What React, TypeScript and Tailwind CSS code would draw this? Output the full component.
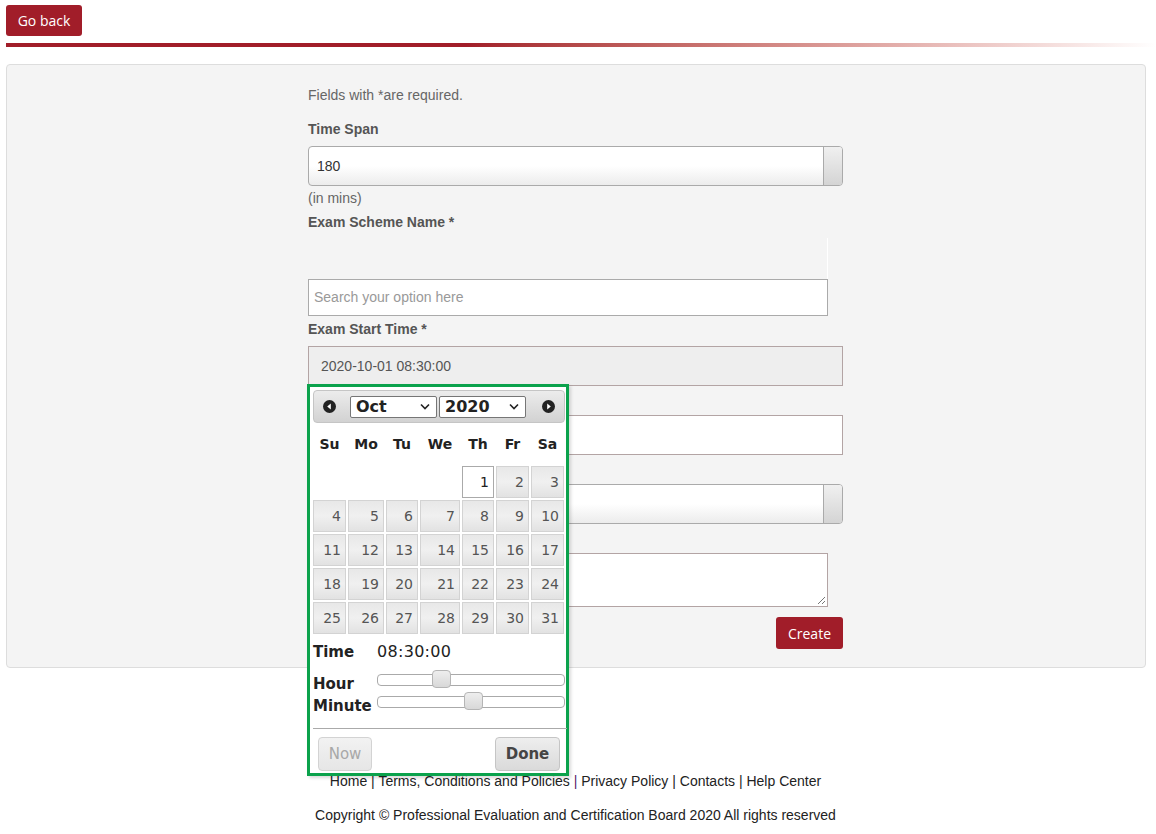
import React from 'react';

const SANS = "font-['Liberation_Sans',Arial,sans-serif]";
const UI = "font-['DejaVu_Sans',Verdana,sans-serif]";

// column tracks of the calendar table (cell + spacing)
const DAY_COLS = 'grid grid-cols-[35px_38px_34px_42px_34px_35px_33px]';
const WEEKDAYS = ['Su', 'Mo', 'Tu', 'We', 'Th', 'Fr', 'Sa'];

const weeks: (number | null)[][] = [
  [null, null, null, null, 1, 2, 3],
  [4, 5, 6, 7, 8, 9, 10],
  [11, 12, 13, 14, 15, 16, 17],
  [18, 19, 20, 21, 22, 23, 24],
  [25, 26, 27, 28, 29, 30, 31],
];

const NavIcon: React.FC<{ dir: 'prev' | 'next' }> = ({ dir }) => (
  <svg width="13" height="13" viewBox="0 0 13 13">
    <circle cx="6.5" cy="6.5" r="6.5" fill="#222" />
    {dir === 'prev' ? <polygon points="7.8,3.5 7.8,9.5 4.2,6.5" fill="#fff" /> : <polygon points="5.2,3.5 5.2,9.5 8.8,6.5" fill="#fff" />}
  </svg>
);

const FakeSelect: React.FC<{ value: string }> = ({ value }) => (
  <div className="flex h-[22px] w-[87px] items-center justify-between rounded-[2px] border border-[#767676] bg-white pl-[5px] pr-[6px]">
    <span className={`${UI} text-[16px] font-bold leading-none text-[#222]`}>{value}</span>
    <svg width="10" height="7" viewBox="0 0 10 7">
      <polyline points="1,1.5 5,5.5 9,1.5" fill="none" stroke="#222" strokeWidth="1.6" />
    </svg>
  </div>
);

const Slider: React.FC<{ left: number }> = ({ left }) => (
  <div className="relative h-[12px] w-[189px] rounded-[4px] border border-[#aaaaaa] bg-white">
    <div
      className="absolute top-[-5px] h-[18px] w-[19px] rounded-[4px] border border-[#b5b5b5] bg-gradient-to-b from-[#eeeeee] to-[#d8d8d8]"
      style={{ left }}
    />
  </div>
);

const DatePicker: React.FC = () => (
  <div className={`${UI} absolute left-[-1px] top-[38px] z-10 w-[262px] border-[3px] border-[#0ba24c] bg-white pb-[2px] pl-[3px] pr-[1px] pt-[3px] shadow-[2px_2px_3px_rgba(0,0,0,0.15)]`}>
    <div className="flex h-[33px] w-[252px] items-center rounded-[4px] border border-[#c5c5c5] bg-gradient-to-b from-[#ececec] to-[#d2d2d2]">
      <div className="ml-[9px] flex"><NavIcon dir="prev" /></div>
      <div className="ml-[14px]"><FakeSelect value="Oct" /></div>
      <div className="ml-[2px]"><FakeSelect value="2020" /></div>
      <div className="ml-[16px] flex"><NavIcon dir="next" /></div>
    </div>

    <div className={`${DAY_COLS} mt-[11px] h-[20px]`}>
      {WEEKDAYS.map((d, i) => (
        <div key={d} className={`text-center text-[14px] font-bold leading-[20px] text-[#222] ${i < 6 ? 'mr-[2px]' : ''}`}>
          {d}
        </div>
      ))}
    </div>

    <div className="mt-[12px] flex flex-col gap-y-[2px]">
      {weeks.map((week, wi) => (
        <div key={wi} className={`${DAY_COLS} h-[32px]`}>
          {week.map((day, di) => {
            const gap = di < 6 ? 'mr-[2px]' : '';
            if (day === null) return <div key={`e-${di}`} className={gap} />;
            const today = day === 1;
            return (
              <div
                key={day}
                className={`${gap} border pr-[4px] text-right text-[14px] leading-[30px] ${
                  today
                    ? 'border-[#aaaaaa] bg-white text-[#212121]'
                    : 'border-[#d3d3d3] bg-gradient-to-b from-[#e8e8e8] via-[#f0f0f0] to-[#e2e2e2] text-[#555555]'
                }`}
              >
                {day}
              </div>
            );
          })}
        </div>
      ))}
    </div>

    <div className="mt-[8px] flex h-[20px] items-center">
      <span className="w-[64px] text-[15px] font-bold text-[#222]">Time</span>
      <span className="text-[16px] tracking-[0.3px] text-[#222]">08:30:00</span>
    </div>
    <div className="mt-[12px] flex h-[20px] items-start">
      <span className="w-[64px] text-[15px] font-bold leading-[20px] text-[#222]">Hour</span>
      <Slider left={54} />
    </div>
    <div className="mt-[2px] flex h-[20px] items-start">
      <span className="w-[64px] text-[15px] font-bold leading-[20px] text-[#222]">Minute</span>
      <Slider left={86} />
    </div>

    <div className="mt-[12px] w-[254px] border-t border-[#aaaaaa]" />
    <div className="mt-[8px] flex justify-between pl-[5px] pr-[5px]">
      <button className="h-[34px] w-[54px] rounded-[4px] border border-[#d3d3d3] bg-gradient-to-b from-[#f2f2f2] to-[#e6e6e6] text-[15px] text-[#a8a8a8]">
        Now
      </button>
      <button className="h-[34px] w-[65px] rounded-[4px] border border-[#c5c5c5] bg-gradient-to-b from-[#eeeeee] to-[#dadada] text-[15px] font-bold text-[#454545]">
        Done
      </button>
    </div>
  </div>
);

const Label: React.FC<{ children?: React.ReactNode; className?: string }> = ({ children, className = '' }) => (
  <div className={`h-[20px] text-[14px] font-bold leading-[20px] text-[#555555] ${className}`}>{children}</div>
);

const SpinInput: React.FC<{ value?: string }> = ({ value }) => (
  <div className="flex h-[40px] w-[535px] overflow-hidden rounded-[4px] border border-[#aaaaaa] bg-gradient-to-b from-white via-white to-[#ececec]">
    <div className="flex flex-1 items-center pl-[8px] text-[14px] text-[#333]">{value}</div>
    <div className="w-[19px] border-l border-[#aaaaaa] bg-gradient-to-b from-[#f0f0f0] to-[#d4d4d4]" />
  </div>
);

const App: React.FC = () => {
  return (
    <div className={`${SANS} min-h-[834px] bg-white pb-[10px]`}>
      <div className="px-[6px] pt-[5px]">
        <button className="h-[31px] w-[76px] rounded-[3px] bg-[#a11d29] font-['Open_Sans',sans-serif] text-[14px] text-white">
          Go back
        </button>
      </div>
      <div className="ml-[6px] mt-[7px] h-[4px] bg-gradient-to-r from-[#a11d29] from-40% to-white" />

      <div className="ml-[6px] mr-[10px] mt-[17px] rounded-[4px] border border-[#dddddd] bg-[#f4f4f4] pb-[18px] pt-[20px]">
        <div className="ml-[301px] w-[535px]">
          <p className="h-[20px] text-[14px] leading-[20px] text-[#666666]">Fields with *are required.</p>

          <Label className="mt-[14px]">Time Span</Label>
          <div className="mt-[7px]">
            <SpinInput value="180" />
          </div>
          <div className="mt-[2px] h-[20px] text-[14px] leading-[20px] text-[#666666]">(in mins)</div>

          <Label className="mt-[4px]">Exam Scheme Name *</Label>
          <div className="mt-[6px] h-[41px] w-[520px] border-r border-white" />
          <div className="flex h-[37px] w-[520px] items-center border border-[#aaaaaa] bg-white pl-[5px] text-[14px] text-[#999999]">
            Search your option here
          </div>

          <Label className="mt-[3px]">Exam Start Time *</Label>
          <div className="relative mt-[7px]">
            <div className="flex h-[40px] w-[535px] items-center border border-[#b3a4a4] bg-[#eeeeee] pl-[12px] text-[14px] text-[#555555]">
              2020-10-01 08:30:00
            </div>
            <DatePicker />
          </div>

          {/* labels below are covered by the open date picker */}
          <Label className="mt-[2px]" />
          <div className="mt-[7px] h-[40px] w-[535px] border border-[#b3a4a4] bg-white" />

          <Label className="mt-[2px]" />
          <div className="mt-[7px]">
            <SpinInput />
          </div>

          <Label className="mt-[2px]" />
          <div className="relative mt-[7px] h-[54px] w-[520px] border border-[#b3a4a4] bg-white">
            <svg className="absolute bottom-[1px] right-[1px]" width="9" height="9" viewBox="0 0 9 9">
              <line x1="8" y1="1" x2="1" y2="8" stroke="#777" strokeWidth="1" />
              <line x1="8" y1="5" x2="5" y2="8" stroke="#777" strokeWidth="1" />
            </svg>
          </div>

          <div className="mt-[10px] flex justify-end">
            <button className="h-[32px] w-[67px] rounded-[3px] bg-[#a11d29] font-['Open_Sans',sans-serif] text-[14px] text-white">
              Create
            </button>
          </div>
        </div>
      </div>

      <footer className="mt-[103px] pr-[5px] text-center text-[14px] leading-[20px] text-[#222222]">
        <p>
          <a className="text-[#222]">Home</a> | <a className="text-[#222]">Terms, Conditions and Policies</a>{' '}
          <span className="text-[#5b1a6b]">|</span> <a className="text-[#222]">Privacy Policy</a> |{' '}
          <a className="text-[#222]">Contacts</a> | <a className="text-[#222]">Help Center</a>
        </p>
        <p className="mt-[14px]">Copyright © Professional Evaluation and Certification Board 2020 All rights reserved</p>
      </footer>
    </div>
  );
};

export default App;
